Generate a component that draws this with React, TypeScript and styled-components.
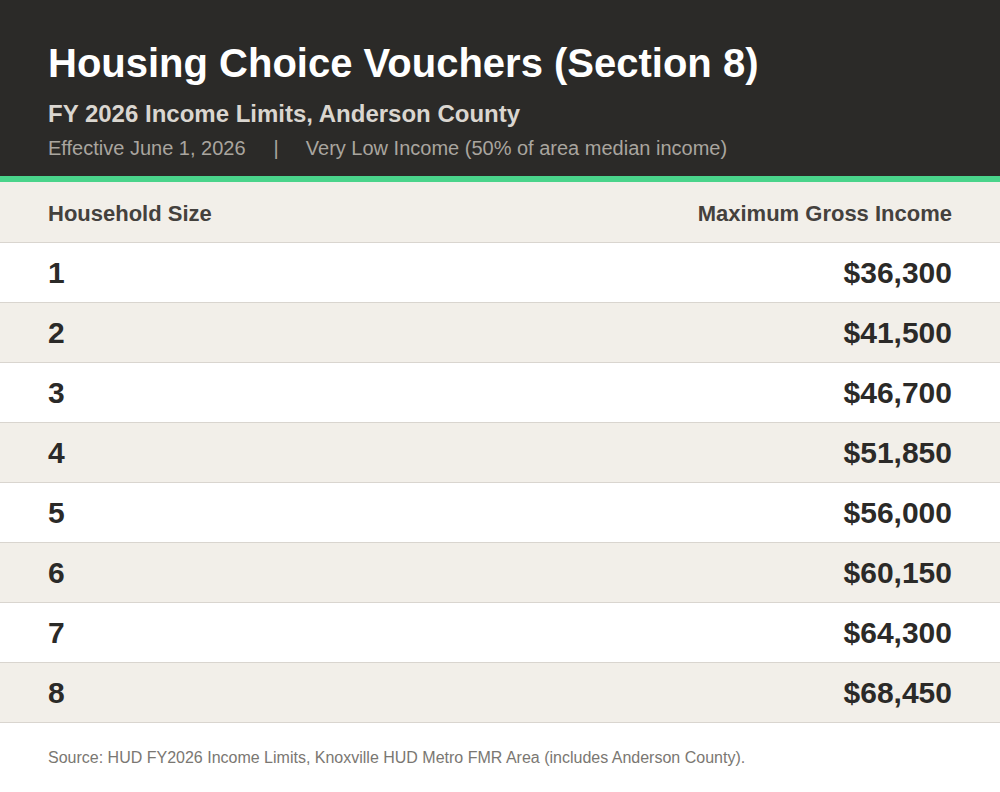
import styled, { createGlobalStyle } from "styled-components";

const ROWS: [number, string][] = [
  [1, "$36,300"],
  [2, "$41,500"],
  [3, "$46,700"],
  [4, "$51,850"],
  [5, "$56,000"],
  [6, "$60,150"],
  [7, "$64,300"],
  [8, "$68,450"],
];

export default function App() {
  return (
    <>
      <GlobalStyle />
      <Page>
        <Header>
          <Title>Housing Choice Vouchers (Section 8)</Title>
          <Subtitle>FY 2026 Income Limits, Anderson County</Subtitle>
          <Meta>
            <span>Effective June 1, 2026</span>
            <Divider>|</Divider>
            <span>Very Low Income (50% of area median income)</span>
          </Meta>
        </Header>
        <Accent />
        <Table>
          <HeadRow>
            <HeadCell>Household Size</HeadCell>
            <HeadCell $right>Maximum Gross Income</HeadCell>
          </HeadRow>
          {ROWS.map(([size, income], i) => (
            <Row key={size} $alt={i % 2 === 1}>
              <Cell>{size}</Cell>
              <Cell $right>{income}</Cell>
            </Row>
          ))}
        </Table>
        <Footer>
          Source: HUD FY2026 Income Limits, Knoxville HUD Metro FMR Area
          (includes Anderson County).
        </Footer>
      </Page>
    </>
  );
}

const GlobalStyle = createGlobalStyle`
  html, body {
    margin: 0;
    padding: 0;
    background: #ffffff;
  }
  body {
    font-family: "Liberation Sans", Arial, sans-serif;
  }
`;

const Page = styled.div`
  width: 1000px;
  min-height: 792px;
  background: #ffffff;
`;

const Header = styled.header`
  background: #2b2a28;
  padding: 40px 48px 14px;
  display: flex;
  flex-direction: column;
`;

const Title = styled.h1`
  margin: 0;
  font-size: 40px;
  line-height: 46px;
  font-weight: 700;
  color: #ffffff;
`;

const Subtitle = styled.h2`
  margin: 14px 0 0;
  font-size: 24px;
  line-height: 28px;
  font-weight: 700;
  color: #dad6d0;
`;

const Meta = styled.div`
  margin-top: 6px;
  font-size: 20px;
  line-height: 28px;
  color: #a9a59f;
  display: flex;
  align-items: center;
`;

const Divider = styled.span`
  margin: 0 27px 0 28px;
`;

const Accent = styled.div`
  height: 6px;
  background: #4ad48b;
`;

const Table = styled.div`
  display: flex;
  flex-direction: column;
`;

const HeadRow = styled.div`
  height: 57px;
  padding: 3px 48px 0;
  display: flex;
  align-items: center;
  justify-content: space-between;
  background: #f2efe9;
  border-bottom: 1px solid #d9d5cf;
`;

const HeadCell = styled.div<{ $right?: boolean }>`
  font-size: 22px;
  font-weight: 700;
  color: #44413d;
  text-align: ${({ $right }) => ($right ? "right" : "left")};
`;

const Row = styled.div<{ $alt: boolean }>`
  height: 59px;
  padding: 0 48px;
  display: flex;
  align-items: center;
  justify-content: space-between;
  background: ${({ $alt }) => ($alt ? "#f2efe9" : "#ffffff")};
  border-bottom: 1px solid #d9d5cf;
`;

const Cell = styled.div<{ $right?: boolean }>`
  font-size: 30px;
  font-weight: 700;
  color: #2b2a28;
  text-align: ${({ $right }) => ($right ? "right" : "left")};
`;

const Footer = styled.p`
  margin: 0;
  padding: 25px 48px 0;
  font-size: 16px;
  line-height: 20px;
  color: #7a7772;
`;
